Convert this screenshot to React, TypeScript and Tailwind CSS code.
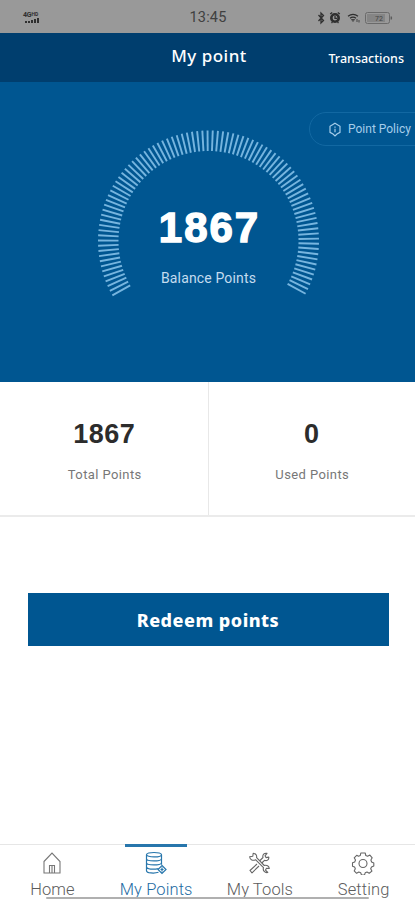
const TICK_COUNT = 89;
const START_ANGLE = 150.5;
const SWEEP = 238;

const ticks = Array.from({ length: TICK_COUNT }, (_, i) => {
  const a = ((START_ANGLE + (SWEEP * i) / (TICK_COUNT - 1)) * Math.PI) / 180;
  return {
    x1: 111.5 + 90 * Math.cos(a),
    y1: 111 + 90 * Math.sin(a),
    x2: 111.5 + 110.5 * Math.cos(a),
    y2: 111 + 110.5 * Math.sin(a),
  };
});

function StatusBar() {
  return (
    <div className="flex h-[33px] items-center bg-[#999999] pt-[2px] text-[#2f2f2f]">
      <div className="flex flex-1 pl-[23px]">
        <div className="w-[19px]">
          <div className="flex items-start">
            <span className="text-[7px] leading-[6px] font-bold tracking-tight">4G</span>
            <span className="text-[5px] leading-[5px] font-bold">HD</span>
          </div>
          <svg width="17" height="5" viewBox="0 0 17 5" fill="currentColor">
            <path d="M2 3h2v2H2zM5 3h2v2H5zM8 2h2v3H8zM11 1h2v4h-2zM14 0h2v5h-2z" />
          </svg>
        </div>
      </div>
      <span className="text-[14.5px] leading-[16px] tracking-[0.2px] text-[#404040]">13:45</span>
      <div className="flex flex-1 items-center justify-end pr-[22px]">
        <svg width="76" height="14" viewBox="0 0 76 14" fill="none" stroke="currentColor">
          <path d="M1.5 4l5 5.5L4 12V2l2.5 2.5-5 5.5" strokeWidth="1.3" />
          <circle cx="18" cy="7" r="3.7" strokeWidth="2.6" />
          <path d="M18 5v2.3h2M13.2 3l2-1.6M22.8 3l-2-1.6M14.5 12l1-1M21.5 12l-1-1" strokeWidth="1.3" />
          <path d="M31 5.2q5-3.6 10 0M33 7.2q3-2 6 0" strokeWidth="1.3" />
          <path d="M34.5 8.5h3L36 10.5zM40 8v3M42 9v2.5" strokeWidth="0.8" />
          <rect x="48.5" y="1.5" width="24" height="11" rx="2" stroke="#6a6a6a" />
          <rect x="50" y="3" width="18" height="8" fill="#858585" stroke="none" />
          <path d="M74.3 5.5v3" stroke="#5c5c5c" strokeWidth="1.5" />
          <text x="58" y="10" fontSize="7" fill="#444" stroke="none">72</text>
        </svg>
      </div>
    </div>
  );
}

function Gauge() {
  return (
    <div className="relative h-[170px] w-[222px]">
      <svg width="222" height="170" viewBox="0 0 222 170" stroke="#76b5df" strokeWidth="1.9">
        {ticks.map((t, i) => (
          <line key={i} {...t} />
        ))}
      </svg>
      <div className="absolute inset-x-0 top-[75px] flex flex-col items-center text-white">
        <span className="ml-[4px] font-['Liberation_Sans'] text-[42px] leading-[46px] font-bold tracking-[2px] [-webkit-text-stroke:1.4px_white]">
          1867
        </span>
        <span className="mt-[17px] ml-[2px] text-[14px] leading-[20px] tracking-[0.15px] text-[#c4dcef]">
          Balance Points
        </span>
      </div>
    </div>
  );
}

function Stat({ value, label }: { value: string; label: string }) {
  return (
    <div className="flex flex-1 flex-col items-center pt-[36px]">
      <span className="font-['Liberation_Sans'] text-[27px] leading-[32px] font-bold tracking-[0.5px] text-[#2c2c2c]">
        {value}
      </span>
      <span className="mt-[16px] ml-[1px] text-[13px] leading-[18px] tracking-[0.4px] text-[#777777]">
        {label}
      </span>
    </div>
  );
}

const HomeIcon = () => (
  <svg width="22" height="24" viewBox="0 0 22 24" fill="none" stroke="#777" strokeWidth="1.1">
    <path d="M3 10.5L11 2l8 8.5V22H3zM8.5 22v-7.5h5V22M11 14.5V22" />
  </svg>
);

const PointsIcon = () => (
  <svg width="22" height="24" viewBox="0 0 22 24" fill="none" stroke="#2776ac" strokeWidth="1.2">
    <ellipse cx="9" cy="3.7" rx="7.5" ry="2.2" />
    <path d="M1.5 3.7v16c0 2.6 8 2.9 12 1.6M16.5 3.7v10M1.5 7.8c0 2.8 15 2.8 15 0M1.5 11.8c0 2.8 15 2.8 15 0M1.5 15.8c0 2.6 7 2.9 12 1.8" />
    <path d="M17 14.5l4 4-4 4-4-4zM17 16.5v4M15.5 18.5h3" />
  </svg>
);

const ToolsIcon = () => (
  <svg width="24" height="24" viewBox="0 0 24 24" fill="none" stroke="#666" strokeWidth="1.1" strokeLinejoin="round">
    <path d="M6.2 2.2l-.4 3-3.2.5C3 9 6 10 8.5 8.7l8 8c-1 3 1.5 5.5 4.3 4.8l-2.3-2.4 1-1.8 2.8.2c-.3-2.6-2.5-3.8-5-3l-7.7-7.8c.5-2.5-1-4.2-3.4-4.5z" />
    <path d="M13 9.5l3-3c-.8-2.6 1.2-4.8 4-4.2l-2 2.5 1 1.8 2.8-.5c.3 2.7-2 4.2-4.3 3.2l-2.7 2.7M10 13l-7 6.5 2 2.3L12 15" />
  </svg>
);

const gearPath =
  "M9.8 2h4.4l.6 2.5 1.8.8 2.3-1.2 2.3 2.7-1.3 2.2.7 2 2.2 1v3l-2.3 1-.8 1.8 1.2 2.3-2.7 2.2-2.2-1.2-1.8.7-.7 2.2h-3l-.8-2.2-1.9-.7-2.2 1.2-2.4-2.4 1.1-2.2-.7-1.7-2.1-.8v-3.4l2.2-.8.8-2-1.3-2.2 2.5-2.5L7.5 5.3l1.8-.8z";

const GearIcon = () => (
  <svg width="24" height="24" viewBox="0 0 24 24" fill="none" stroke="#666" strokeWidth="1.1" strokeLinejoin="round">
    <path d={gearPath} />
    <circle cx="12" cy="12.5" r="4" />
  </svg>
);

const tabs = [
  { label: "Home", icon: <HomeIcon />, active: false },
  { label: "My Points", icon: <PointsIcon />, active: true },
  { label: "My Tools", icon: <ToolsIcon />, active: false },
  { label: "Setting", icon: <GearIcon />, active: false },
];

export default function App() {
  return (
    <div className="flex h-[900px] w-[415px] flex-col overflow-hidden bg-white font-['Roboto',sans-serif]">
      <StatusBar />
      <header className="grid h-[49px] grid-cols-3 items-center bg-[#003e6e] font-['Noto_Sans'] text-white">
        <h1 className="col-start-2 pb-[4px] pl-[3px] text-center text-[17px] leading-[24px] font-medium tracking-[0.5px]">
          My point
        </h1>
        <span className="pt-[2px] pr-[11px] text-right text-[12.5px] leading-[18px] font-medium">
          Transactions
        </span>
      </header>

      <section className="relative flex h-[300px] justify-center bg-[#005691] pt-[48px]">
        <Gauge />
        <button className="absolute top-[30px] right-[-20px] flex h-[34px] w-[126px] items-center rounded-full border border-[#1268a2] pl-[18px] text-[12px] text-[#a5cdea]">
          <svg width="14" height="15" viewBox="0 0 14 15" fill="none" stroke="currentColor" strokeWidth="1.2">
            <path d="M7 1.3l5 3v6L9 12l-2 2-2-2-3-1.7v-6zM7 4.5v1.2M7 6.8v3.5" />
          </svg>
          <span className="ml-[6px] whitespace-nowrap">Point Policy</span>
        </button>
      </section>

      <section className="flex h-[135px] border-b-2 border-[#ebebeb] pl-px">
        <Stat value="1867" label="Total Points" />
        <div className="w-px bg-[#e8e8e8]" />
        <Stat value="0" label="Used Points" />
      </section>

      <div className="pt-[76px] pr-[26.5px] pl-[27.5px]">
        <button className="h-[53px] w-full bg-[#005691] pt-px font-['Noto_Sans'] text-[18px] font-extrabold tracking-[0.5px] text-white">
          Redeem points
        </button>
      </div>

      <nav className="relative mt-auto grid h-[56px] grid-cols-4 border-t border-[#e6e6e6]">
        {tabs.map((tab) => (
          <div
            key={tab.label}
            className={`relative flex flex-col items-center pt-[6px] ${tab.active ? "text-[#1e6ca3]" : "text-[#5c5c5c]"}`}
          >
            {tab.active && <div className="absolute top-[-1px] h-[3px] w-[62px] bg-[#2776ac]" />}
            {tab.icon}
            <span className="mt-[5px] ml-[1px] text-[16.5px] leading-[20px] font-light tracking-[0.1px] whitespace-nowrap">
              {tab.label}
            </span>
          </div>
        ))}
        <div className="absolute bottom-[1px] left-[46px] h-[2px] w-[323px] rounded-full bg-[#b0b0b0]" />
      </nav>
    </div>
  );
}
